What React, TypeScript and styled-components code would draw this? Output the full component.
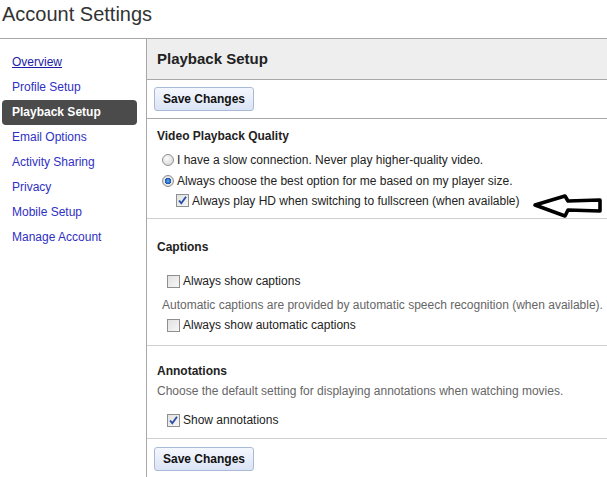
import React from 'react';
import styled, { createGlobalStyle } from 'styled-components';

const GlobalStyle = createGlobalStyle`
  html, body {
    margin: 0;
    padding: 0;
    background: #fff;
  }
  body {
    font-family: 'Liberation Sans', Arial, sans-serif;
    color: #222;
  }
`;

const navItems = [
  'Overview',
  'Profile Setup',
  'Playback Setup',
  'Email Options',
  'Activity Sharing',
  'Privacy',
  'Mobile Setup',
  'Manage Account',
];

const App: React.FC = () => {
  return (
    <Page>
      <GlobalStyle />
      <Title>Account Settings</Title>
      <Main>
        <Sidebar>
          {navItems.map((item, i) => (
            <NavItem key={item} $active={item === 'Playback Setup'} $underline={i === 0}>
              {item}
            </NavItem>
          ))}
        </Sidebar>
        <Content>
          <PanelHeader>Playback Setup</PanelHeader>
          <ButtonBar $bottomBorder $top={7}>
            <SaveButton>Save Changes</SaveButton>
          </ButtonBar>

          <Section $top={9} $bottom={8}>
            <SectionTitle>Video Playback Quality</SectionTitle>
            <Gap $h={5} />
            <OptionRow $indent={5} $h={21}>
              <Radio />
              I have a slow connection. Never play higher-quality video.
            </OptionRow>
            <OptionRow $indent={5} $h={21}>
              <Radio $checked />
              Always choose the best option for me based on my player size.
            </OptionRow>
            <OptionRow $indent={19} $h={19}>
              <Check $checked />
              Always play HD when switching to fullscreen (when available)
            </OptionRow>
          </Section>

          <Section $top={20} $bottom={10}>
            <SectionTitle>Captions</SectionTitle>
            <Gap $h={16} />
            <OptionRow $indent={10} $h={20}>
              <Check />
              Always show captions
            </OptionRow>
            <Note $indent={5} $top={6}>
              Automatic captions are provided by automatic speech recognition (when available).
            </Note>
            <Gap $h={2} />
            <OptionRow $indent={10} $h={20}>
              <Check />
              Always show automatic captions
            </OptionRow>
          </Section>

          <Section $top={17} $bottom={8}>
            <SectionTitle>Annotations</SectionTitle>
            <Note $indent={0} $top={4}>
              Choose the default setting for displaying annotations when watching movies.
            </Note>
            <Gap $h={11} />
            <OptionRow $indent={10} $h={20}>
              <Check $checked />
              Show annotations
            </OptionRow>
          </Section>

          <ButtonBar $top={8}>
            <SaveButton>Save Changes</SaveButton>
          </ButtonBar>
        </Content>
      </Main>
      <ArrowMark width="79" height="32" viewBox="0 0 79 32">
        <path
          d="M7 15 L37 6 L40 11 L72 10 L72 21 L40 20 L37 26 Z"
          fill="#fff"
          stroke="#000"
          strokeWidth="3.6"
          strokeLinejoin="round"
        />
      </ArrowMark>
    </Page>
  );
};

const Radio: React.FC<{ $checked?: boolean }> = ({ $checked }) => (
  <RadioMark $checked={$checked} />
);

const Check: React.FC<{ $checked?: boolean }> = ({ $checked }) => (
  <CheckMark>
    {$checked && (
      <svg width="11" height="11" viewBox="0 0 11 11">
        <path d="M2 5.5 L4.3 8.2 L9 1.8" fill="none" stroke="#2c4fa8" strokeWidth="1.9" />
      </svg>
    )}
  </CheckMark>
);

const Page = styled.div`
  position: relative;
  min-height: 100vh;
  display: flex;
  flex-direction: column;
`;

const Title = styled.h1`
  margin: 0;
  height: 38px;
  padding: 3px 0 0 2px;
  box-sizing: border-box;
  font-size: 20px;
  line-height: 23px;
  font-weight: normal;
  color: #333;
`;

const Main = styled.div`
  flex: 1;
  display: flex;
  border-top: 1px solid #a8a8a8;
`;

const Sidebar = styled.ul`
  list-style: none;
  margin: 0;
  width: 147px;
  box-sizing: border-box;
  padding: 11px 9px 0 2px;
  border-right: 1px solid #a8a8a8;
  flex-shrink: 0;
`;

const NavItem = styled.li<{ $active?: boolean; $underline?: boolean }>`
  height: 25px;
  line-height: 25px;
  padding-left: 10px;
  font-size: 12px;
  border-radius: 4px;
  cursor: pointer;
  color: ${(p) => (p.$active ? '#fff' : p.$underline ? '#1c1ca6' : '#2f2fc4')};
  font-weight: ${(p) => (p.$active ? 'bold' : 'normal')};
  background: ${(p) => (p.$active ? '#4b4b4b' : 'transparent')};
  text-decoration: ${(p) => (p.$underline ? 'underline' : 'none')};
`;

const Content = styled.div`
  flex: 1;
  min-width: 0;
  font-size: 12px;
`;

const PanelHeader = styled.div`
  height: 40px;
  line-height: 40px;
  padding-left: 10px;
  background: #eeeeee;
  border-bottom: 1px solid #a8a8a8;
  font-size: 15px;
  font-weight: bold;
  color: #222;
`;

const ButtonBar = styled.div<{ $bottomBorder?: boolean; $top: number }>`
  padding: ${(p) => p.$top}px 7px 7px 7px;
  border-bottom: ${(p) => (p.$bottomBorder ? '1px solid #a8a8a8' : 'none')};
`;

const SaveButton = styled.button`
  width: 100px;
  height: 24px;
  padding: 0;
  border: 1px solid #a9bad8;
  border-radius: 3px;
  background: linear-gradient(#f4f7fd, #dbe4f5);
  font-family: 'Liberation Sans', Arial, sans-serif;
  font-size: 12px;
  font-weight: bold;
  color: #111;
  cursor: pointer;
`;

const Section = styled.div<{ $top: number; $bottom: number }>`
  padding: ${(p) => p.$top}px 0 ${(p) => p.$bottom}px 10px;
  border-bottom: 1px solid #cfcfcf;
`;

const SectionTitle = styled.div`
  font-size: 12px;
  font-weight: bold;
  line-height: 16px;
  color: #222;
`;

const Gap = styled.div<{ $h: number }>`
  height: ${(p) => p.$h}px;
`;

const OptionRow = styled.label<{ $indent: number; $h: number }>`
  display: flex;
  align-items: center;
  gap: 3px;
  height: ${(p) => p.$h}px;
  padding-left: ${(p) => p.$indent}px;
  color: #222;
  white-space: nowrap;
`;

const RadioMark = styled.span<{ $checked?: boolean }>`
  width: 12px;
  height: 12px;
  box-sizing: border-box;
  border-radius: 50%;
  border: 1px solid #8f9091;
  background: ${(p) =>
    p.$checked
      ? 'radial-gradient(circle, #6fb0f0 0, #2a6fd0 2px, #1c4f9e 3px, #eaeaea 3.5px, #d4d4d4 6px)'
      : 'radial-gradient(circle at 40% 35%, #fafafa, #d2d2d2)'};
  flex-shrink: 0;
`;

const CheckMark = styled.span`
  width: 13px;
  height: 13px;
  box-sizing: border-box;
  border: 1px solid #8e8f8f;
  background: linear-gradient(135deg, #e2e2e2, #f6f6f6);
  display: flex;
  align-items: center;
  justify-content: center;
  flex-shrink: 0;
`;

const Note = styled.div<{ $indent: number; $top?: number }>`
  padding-left: ${(p) => p.$indent}px;
  margin-top: ${(p) => p.$top ?? 0}px;
  line-height: 16px;
  color: #666;
  white-space: nowrap;
`;

const ArrowMark = styled.svg`
  position: absolute;
  left: 528px;
  top: 190px;
`;

export default App;
